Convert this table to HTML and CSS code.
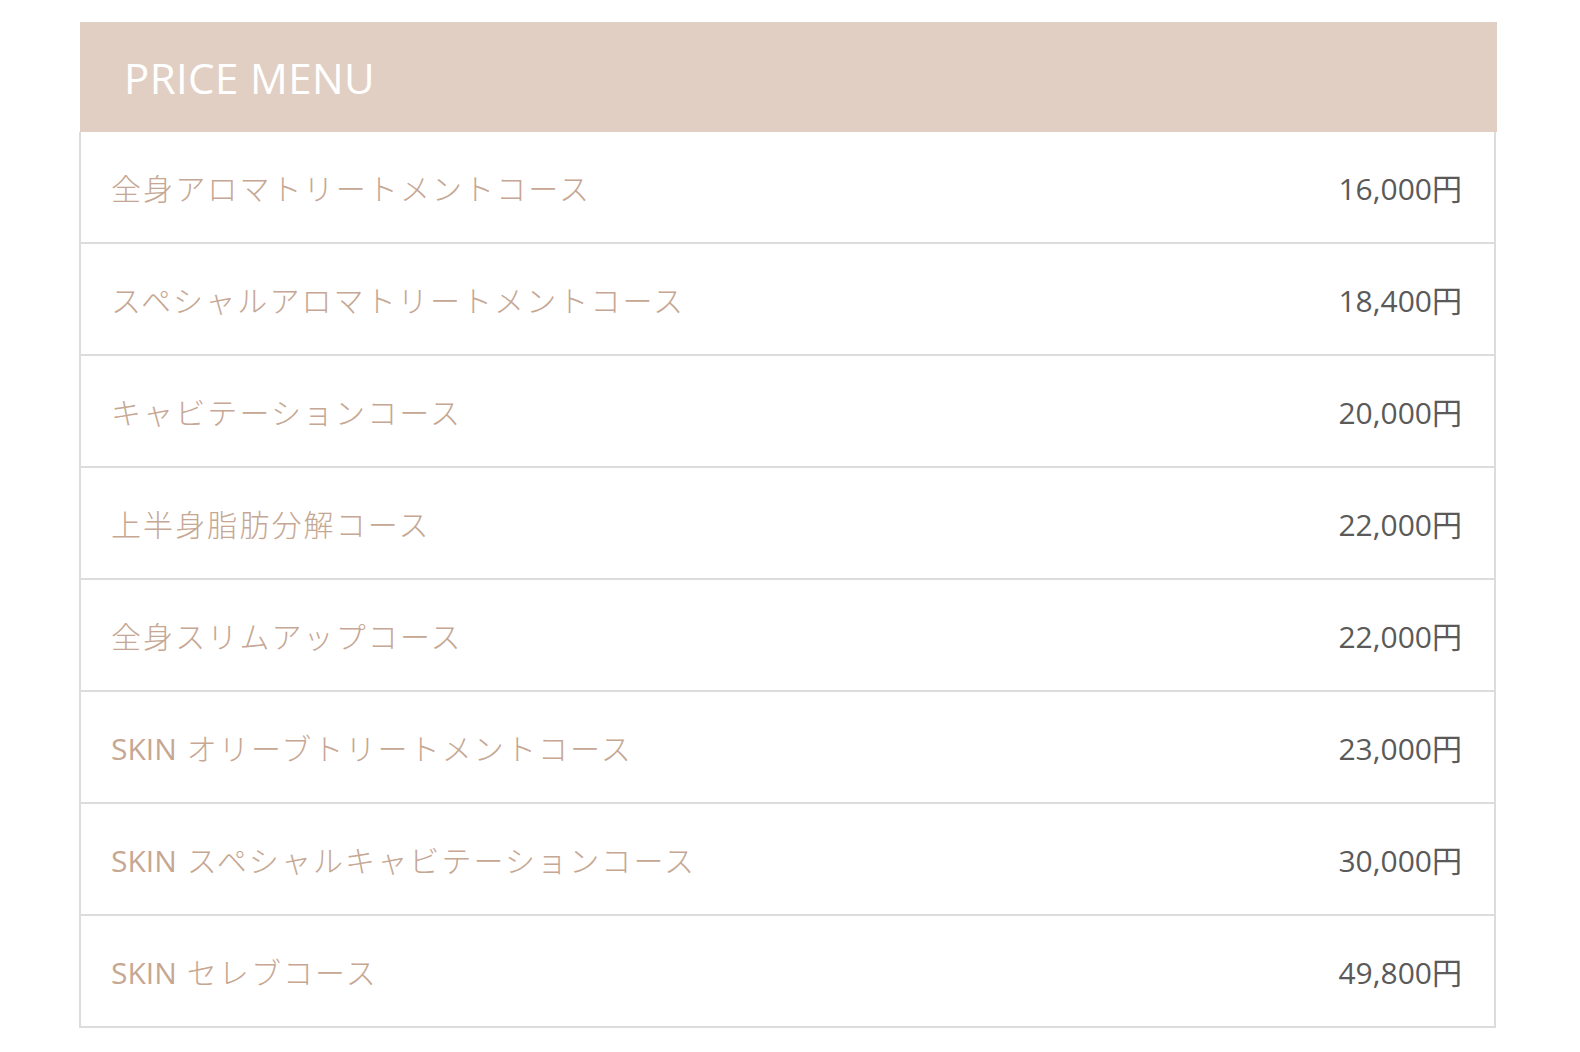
FILE: index.html
```html
<!DOCTYPE html>
<html lang="ja">
<head>
<meta charset="utf-8">
<title>PRICE MENU</title>
<link rel="stylesheet" href="styles.css">
</head>
<body>
<section class="price">
  <h2 class="price-title">PRICE MENU</h2>
  <ul class="price-list">
    <li class="price-row"><span class="name">全身アロマトリートメントコース</span><span class="value">16,000円</span></li>
    <li class="price-row"><span class="name">スペシャルアロマトリートメントコース</span><span class="value">18,400円</span></li>
    <li class="price-row"><span class="name">キャビテーションコース</span><span class="value">20,000円</span></li>
    <li class="price-row"><span class="name">上半身脂肪分解コース</span><span class="value">22,000円</span></li>
    <li class="price-row"><span class="name">全身スリムアップコース</span><span class="value">22,000円</span></li>
    <li class="price-row"><span class="name"><span class="latin">SKIN</span> オリーブトリートメントコース</span><span class="value">23,000円</span></li>
    <li class="price-row"><span class="name"><span class="latin">SKIN</span> スペシャルキャビテーションコース</span><span class="value">30,000円</span></li>
    <li class="price-row"><span class="name"><span class="latin">SKIN</span> セレブコース</span><span class="value">49,800円</span></li>
  </ul>
</section>
</body>
</html>
```
FILE: styles.css
```css
html, body {
  margin: 0;
  padding: 0;
  background: #fff;
}
body {
  font-family: "Open Sans", "Noto Sans CJK JP", sans-serif;
}
.price {
  width: 1417px;
  margin: 22px 0 0 80px;
}
.price-title {
  margin: 0;
  height: 110px;
  display: flex;
  align-items: center;
  padding: 0 0 0 44px;
  background: #e2cfc3;
  color: #fff;
  font-size: 42px;
  font-weight: 400;
  letter-spacing: 0.4px;
}
.price-list {
  list-style: none;
  margin: 0;
  padding: 0;
  width: 1413px;
  border-left: 2px solid #dcdcdc;
  border-right: 2px solid #dcdcdc;
  margin-left: -1px;
}
.price-row {
  height: 110px;
  display: flex;
  align-items: center;
  justify-content: space-between;
  padding: 0 32px 0 30px;
  border-bottom: 2px solid #dcdcdc;
  font-size: 30px;
}
.name {
  color: #c6a793;
  font-weight: 300;
  letter-spacing: 2.1px;
}
.latin {
  font-weight: 400;
  letter-spacing: 0;
}
.value {
  color: #5a5a5a;
  font-weight: 400;
}
```
